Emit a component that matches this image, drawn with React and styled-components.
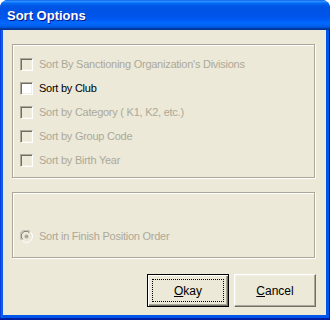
import React from "react";
import styled, { createGlobalStyle } from "styled-components";

const GlobalStyle = createGlobalStyle`
  html, body {
    margin: 0;
    padding: 0;
    background: #ffffff;
  }
  body {
    font-family: "Liberation Sans", Arial, sans-serif;
  }
`;

const Window = styled.div`
  width: 330px;
  height: 320px;
  display: flex;
  flex-direction: column;
  border-radius: 8px 8px 0 0;
  overflow: hidden;
  background: #0055ea;
  box-sizing: border-box;
`;

const TitleBar = styled.div`
  height: 30px;
  flex: none;
  display: flex;
  align-items: center;
  padding-left: 7px;
  box-sizing: border-box;
  background: linear-gradient(
    to bottom,
    #0058ee 0%,
    #3593ff 4%,
    #288eff 6%,
    #127dff 8%,
    #036ffc 10%,
    #0262ee 14%,
    #0057e5 20%,
    #0054e3 24%,
    #0055eb 56%,
    #005bf5 66%,
    #026afe 76%,
    #0062ef 86%,
    #0052d6 92%,
    #0040ab 94%,
    #003092 100%
  );
`;

const Title = styled.span`
  color: #ffffff;
  font-family: "Liberation Sans", Arial, sans-serif;
  font-weight: bold;
  font-size: 13px;
  text-shadow: 1px 1px 0 #0a1883;
`;

const Frame = styled.div`
  flex: 1;
  display: flex;
  padding: 0 4px 5px 3px;
  background: linear-gradient(to right, #0831d9 0, #166aee 2px, #0055ea 3px);
  box-shadow: inset 0 -2px 0 #001ea0, inset -1px 0 0 #001ea0;
`;

const Client = styled.div`
  flex: 1;
  background: #ece9d8;
  display: flex;
  flex-direction: column;
  padding: 14px 10px 8px 9px;
  box-sizing: border-box;
`;

const GroupBox = styled.div`
  height: ${(p) => p.$height}px;
  box-sizing: border-box;
  border: 1px solid #aca899;
  box-shadow: inset 1px 1px 0 #ffffff, 1px 1px 0 #ffffff;
  margin-right: 1px;
  margin-bottom: ${(p) => p.$gap || 0}px;
  display: flex;
  flex-direction: column;
  justify-content: ${(p) => (p.$bottom ? "flex-end" : "flex-start")};
  padding: ${(p) => (p.$bottom ? "0 8px 9px 7px" : "7px 8px 0 7px")};
`;

const Row = styled.div`
  height: 24px;
  display: flex;
  align-items: center;
  font-size: 11px;
  letter-spacing: -0.25px;
  color: ${(p) => (p.$disabled ? "#aca899" : "#000000")};
`;

const CheckBox = styled.span`
  width: 13px;
  height: 13px;
  flex: none;
  box-sizing: border-box;
  border: 1px solid;
  border-color: #aca899 #ffffff #ffffff #aca899;
  box-shadow: inset 1px 1px 0 #716f64, inset -1px -1px 0 #f1efe2;
  background: ${(p) => (p.$disabled ? "#ece9d8" : "#ffffff")};
`;

const Label = styled.span`
  margin-left: 6px;
  white-space: nowrap;
`;

const Buttons = styled.div`
  margin-top: auto;
  display: flex;
  justify-content: flex-end;
  gap: 5px;
`;

const Button = styled.div`
  width: 82px;
  height: 33px;
  box-sizing: border-box;
  position: relative;
  display: flex;
  align-items: center;
  justify-content: center;
  font-size: 12px;
  color: #000000;
  background: #ece9d8;
  border: 1px solid;
  border-color: ${(p) =>
    p.$default ? "#000000" : "#ffffff #716f64 #716f64 #ffffff"};
  box-shadow: ${(p) =>
    p.$default
      ? "inset 1px 1px 0 #ffffff, inset -1px -1px 0 #716f64, inset -2px -2px 0 #aca899"
      : "inset -1px -1px 0 #aca899, inset 1px 1px 0 #f1efe2"};
`;

const Focus = styled.span`
  position: absolute;
  inset: 4px;
  border: 1px dotted #000000;
`;

const Key = styled.span`
  text-decoration: underline;
`;

function Radio() {
  return (
    <svg width="13" height="13" viewBox="0 0 13 13" style={{ flex: "none" }}>
      <circle cx="6.5" cy="6.5" r="6" fill="#ece9d8" stroke="#ffffff" />
      <path d="M1.6 10.2 A5.8 5.8 0 0 1 10.2 1.6" stroke="#aca899" fill="none" />
      <path d="M2.6 9.3 A4.6 4.6 0 0 1 9.3 2.6" stroke="#716f64" fill="none" />
      <circle cx="6.5" cy="6.5" r="2" fill="#aca899" />
    </svg>
  );
}

const options = [
  { label: "Sort By Sanctioning Organization's Divisions", disabled: true },
  { label: "Sort by Club", disabled: false },
  { label: "Sort by Category ( K1, K2, etc.)", disabled: true },
  { label: "Sort by Group Code", disabled: true },
  { label: "Sort by Birth Year", disabled: true }
];

export default function App() {
  return (
    <>
      <GlobalStyle />
      <Window>
        <TitleBar>
          <Title>Sort Options</Title>
        </TitleBar>
        <Frame>
          <Client>
            <GroupBox $height={134} $gap={14}>
              {options.map((o) => (
                <Row key={o.label} $disabled={o.disabled}>
                  <CheckBox $disabled={o.disabled} />
                  <Label>{o.label}</Label>
                </Row>
              ))}
            </GroupBox>
            <GroupBox $height={66} $bottom>
              <Row $disabled>
                <Radio />
                <Label>Sort in Finish Position Order</Label>
              </Row>
            </GroupBox>
            <Buttons>
              <Button $default>
                <Focus />
                <span>
                  <Key>O</Key>kay
                </span>
              </Button>
              <Button>
                <span>
                  <Key>C</Key>ancel
                </span>
              </Button>
            </Buttons>
          </Client>
        </Frame>
      </Window>
    </>
  );
}
